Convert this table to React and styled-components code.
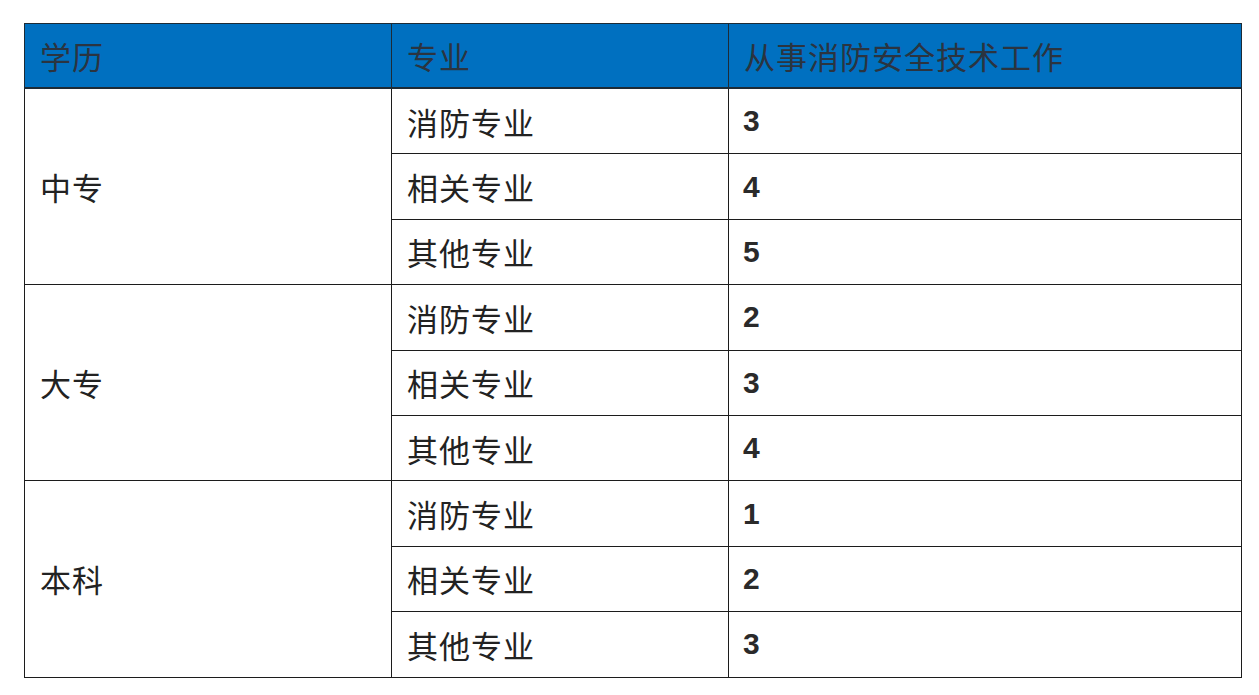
import React from 'react';
import styled, { createGlobalStyle } from 'styled-components';

const GlobalStyle = createGlobalStyle`
  body {
    margin: 0;
    background: #ffffff;
    font-family: "Noto Sans CJK SC", "Liberation Sans", sans-serif;
  }
`;

const Page = styled.div`
  padding: 23px 0 0 24px;
`;

const Table = styled.table`
  border-collapse: collapse;
  table-layout: fixed;
  width: 1217px;
  color: #222;
`;

const HeadCell = styled.th`
  background: #0070c0;
  color: #2b3440;
  font-weight: 400;
  font-size: 31px;
  line-height: 1.2;
  letter-spacing: 1px;
  text-align: left;
  height: 63px;
  padding: 0 0 0 15px;
  border: 1px solid #1d2b36;
  border-bottom: 2px solid #1d2b36;
`;

const Cell = styled.td`
  font-size: ${p => (p.$num ? 30 : 31)}px;
  line-height: 1.2;
  letter-spacing: ${p => (p.$num ? 0 : 1)}px;
  height: 64.4px;
  padding: 0 0 0 ${p => (p.$num ? 14 : 15)}px;
  border: 1px solid #1c1c1c;
  vertical-align: middle;
  font-family: ${p => (p.$num ? '"Liberation Sans", Arial, sans-serif' : 'inherit')};
  font-weight: ${p => (p.$num ? 700 : 400)};
  color: ${p => (p.$num ? '#2a2a2a' : '#222')};
`;

const data = [
  { level: '中专', rows: [['消防专业', 3], ['相关专业', 4], ['其他专业', 5]] },
  { level: '大专', rows: [['消防专业', 2], ['相关专业', 3], ['其他专业', 4]] },
  { level: '本科', rows: [['消防专业', 1], ['相关专业', 2], ['其他专业', 3]] },
];

export default function App() {
  return (
    <Page>
      <GlobalStyle />
      <Table>
        <colgroup>
          <col style={{ width: 367 }} />
          <col style={{ width: 337 }} />
          <col style={{ width: 513 }} />
        </colgroup>
        <thead>
          <tr>
            <HeadCell>学历</HeadCell>
            <HeadCell>专业</HeadCell>
            <HeadCell>从事消防安全技术工作</HeadCell>
          </tr>
        </thead>
        <tbody>
          {data.map(group =>
            group.rows.map(([major, years], i) => (
              <tr key={group.level + i}>
                {i === 0 && <Cell rowSpan={3}>{group.level}</Cell>}
                <Cell>{major}</Cell>
                <Cell $num>{years}</Cell>
              </tr>
            ))
          )}
        </tbody>
      </Table>
    </Page>
  );
}
